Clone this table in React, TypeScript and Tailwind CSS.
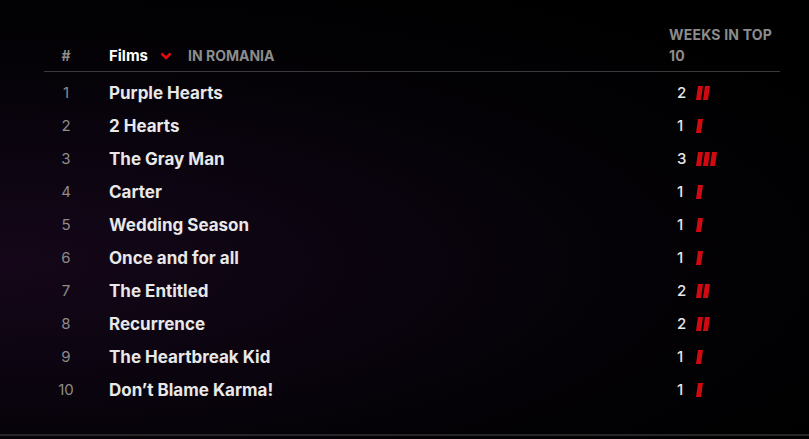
const films = [
  { title: "Purple Hearts", weeks: 2 },
  { title: "2 Hearts", weeks: 1 },
  { title: "The Gray Man", weeks: 3 },
  { title: "Carter", weeks: 1 },
  { title: "Wedding Season", weeks: 1 },
  { title: "Once and for all", weeks: 1 },
  { title: "The Entitled", weeks: 2 },
  { title: "Recurrence", weeks: 2 },
  { title: "The Heartbreak Kid", weeks: 1 },
  { title: "Don\u2019t Blame Karma!", weeks: 1 },
];

const Bars = ({ count }: { count: number }) => (
  <div className="flex gap-[2px] ml-[11px] -mt-[1px]">
    {Array.from({ length: count }).map((_, i) => (
      <span key={i} className="block w-[5px] h-[14px] bg-[#d10a12] skew-x-[-8deg]" />
    ))}
  </div>
);

export default function App() {
  return (
    <div
      className="w-[809px] h-[439px] flex flex-col bg-[radial-gradient(ellipse_at_0%_60%,#150719_0%,#0a040e_35%,#020103_65%,#000_100%)] text-white"
      style={{ fontFamily: "Inter, 'Noto Sans', sans-serif" }}
    >
      <div className="ml-[44px] w-[736px]">
        <div className="grid grid-cols-[44px_1fr_111px] items-end pt-[24px] pb-[5px] leading-[21px] border-b border-[#3a3a3c]">
          <div className="text-center text-[14px] font-bold text-[#8c8c8c]">#</div>
          <div className="flex items-center pl-[21px]">
            <span className="text-[15px] font-bold text-white">Films</span>
            <svg width="12" height="9" viewBox="0 0 12 9" className="ml-[12px] mt-[1px]">
              <path d="M1.5 1.5 L6 6 L10.5 1.5" fill="none" stroke="#e50914" strokeWidth="2.6" />
            </svg>
            <span className="ml-[16px] text-[14px] font-bold text-[#8c8c8c]">IN ROMANIA</span>
          </div>
          <div className="text-[14px] font-bold text-[#8c8c8c] tracking-[0.2px]">WEEKS IN TOP 10</div>
        </div>
        <div className="pt-[5px]">
          {films.map((f, i) => (
            <div key={f.title} className="grid grid-cols-[44px_1fr_111px] items-center h-[33px]">
              <div className="text-center text-[15px] text-[#8c8c8c]">{i + 1}</div>
              <div className="pl-[21px] text-[17px] font-bold text-[#e8e8e8]">{f.title}</div>
              <div className="flex items-center pl-[8px]">
                <span className="text-[15px] font-medium text-[#e8e8e8] w-[9px]">{f.weeks}</span>
                <Bars count={f.weeks} />
              </div>
            </div>
          ))}
        </div>
      </div>
      <div className="mt-auto mb-[3px] h-[2px] bg-[#262626]" />
    </div>
  );
}
